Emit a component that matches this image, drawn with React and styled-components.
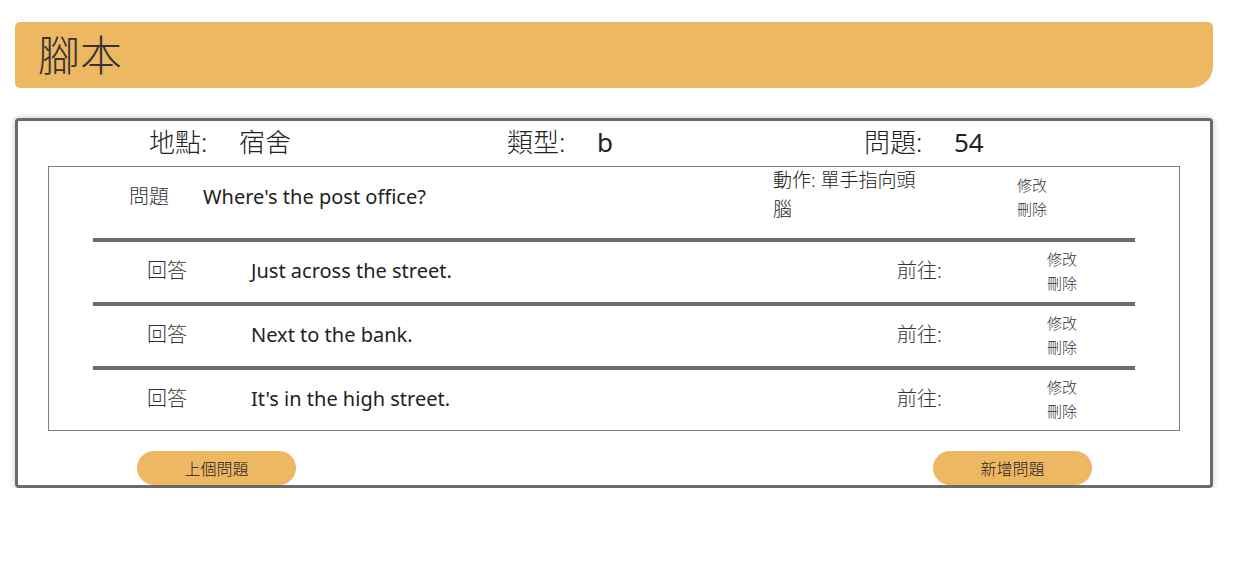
import React from 'react';
import styled, { createGlobalStyle } from 'styled-components';

const GlobalStyle = createGlobalStyle`
  body {
    margin: 0;
    background: #ffffff;
    font-family: "Noto Sans", "Noto Sans CJK TC", sans-serif;
    font-weight: 300;
    color: #333333;
  }
`;

const question = {
  text: "Where's the post office?",
  action: '動作: 單手指向頭腦',
};

const answers = [
  { text: 'Just across the street.' },
  { text: 'Next to the bank.' },
  { text: "It's in the high street." },
];

export default function App() {
  return (
    <>
      <GlobalStyle />
      <Page>
        <TitleBar>
          <Title>腳本</Title>
        </TitleBar>
        <Card>
          <InfoRow>
            <InfoItem>
              <InfoLabel>地點:</InfoLabel>
              <span>宿舍</span>
            </InfoItem>
            <InfoItem>
              <InfoLabel>類型:</InfoLabel>
              <InfoValue>b</InfoValue>
            </InfoItem>
            <InfoItem>
              <InfoLabel>問題:</InfoLabel>
              <InfoValue>54</InfoValue>
            </InfoItem>
          </InfoRow>
          <ScriptBox>
            <QuestionRow>
              <Label>問題</Label>
              <Sentence>{question.text}</Sentence>
              <Action>{question.action}</Action>
              <Edits>
                <EditLink>修改</EditLink>
                <EditLink>刪除</EditLink>
              </Edits>
            </QuestionRow>
            {answers.map((a, i) => (
              <React.Fragment key={i}>
                <Divider />
                <AnswerRow>
                  <Label>回答</Label>
                  <Sentence>{a.text}</Sentence>
                  <Label>前往:</Label>
                  <Edits>
                    <EditLink>修改</EditLink>
                    <EditLink>刪除</EditLink>
                  </Edits>
                </AnswerRow>
              </React.Fragment>
            ))}
          </ScriptBox>
          <ButtonRow>
            <PillButton>上個問題</PillButton>
            <PillButton>新增問題</PillButton>
          </ButtonRow>
        </Card>
      </Page>
    </>
  );
}

const Page = styled.div`
  padding: 22px 29px 0 15px;
`;

const TitleBar = styled.header`
  height: 66px;
  background-color: #edb861;
  border-radius: 5px 5px 22px 5px;
  display: flex;
  align-items: center;
  padding-left: 23px;
`;

const Title = styled.h1`
  margin: 0;
  font-size: 42px;
  font-weight: 300;
  line-height: 1;
  color: #333333;
`;

const Card = styled.section`
  margin-top: 30px;
  border: 3px solid #6b6b6b;
  border-radius: 4px;
  box-shadow: 0 0 7px rgba(0, 0, 0, 0.22);
  background: #ffffff;
`;

const InfoRow = styled.div`
  height: 45px;
  box-sizing: border-box;
  padding: 0 0 3px 131px;
  display: grid;
  grid-template-columns: 358px 357px auto;
  align-items: center;
  font-size: 26px;
  line-height: 1;
  color: #222222;
`;

const InfoItem = styled.div`
  display: flex;
  align-items: center;
`;

const InfoLabel = styled.span`
  width: 90px;
`;

const InfoValue = styled.span`
  font-weight: 400;
`;

const ScriptBox = styled.div`
  margin: 0 30px;
  border: 1px solid #808080;
`;

const QuestionRow = styled.div`
  height: 71px;
  box-sizing: border-box;
  padding: 0 132px 12px 80px;
  display: grid;
  grid-template-columns: 74px 1fr 244px auto;
  align-items: center;
`;

const AnswerRow = styled.div`
  height: 60px;
  box-sizing: border-box;
  margin: 0 44px;
  padding: 0 58px 2px 54px;
  display: grid;
  grid-template-columns: 104px 1fr 150px auto;
  align-items: center;
`;

const Label = styled.span`
  font-size: 20px;
  line-height: 1;
  color: #333333;
`;

const Sentence = styled.span`
  font-size: 20px;
  font-weight: 400;
  line-height: 1;
  color: #222222;
`;

const Action = styled.div`
  align-self: start;
  margin-top: -1px;
  width: 150px;
  font-size: 19px;
  line-height: 29px;
  color: #222222;
`;

const Edits = styled.div`
  display: flex;
  flex-direction: column;
`;

const EditLink = styled.span`
  font-size: 15px;
  line-height: 24px;
  color: #333333;
  cursor: pointer;
`;

const Divider = styled.div`
  height: 4px;
  margin: 0 44px;
  background-color: #6b6b6b;
`;

const ButtonRow = styled.div`
  display: flex;
  justify-content: space-between;
  padding: 0 118px 0 119px;
  margin-top: 20px;
`;

const PillButton = styled.button`
  width: 159px;
  height: 34px;
  padding: 0 0 1px;
  border: none;
  border-radius: 17px;
  background-color: #edb861;
  font-family: "Noto Sans", "Noto Sans CJK TC", sans-serif;
  font-weight: 300;
  font-size: 16px;
  color: #222222;
  cursor: pointer;
`;
